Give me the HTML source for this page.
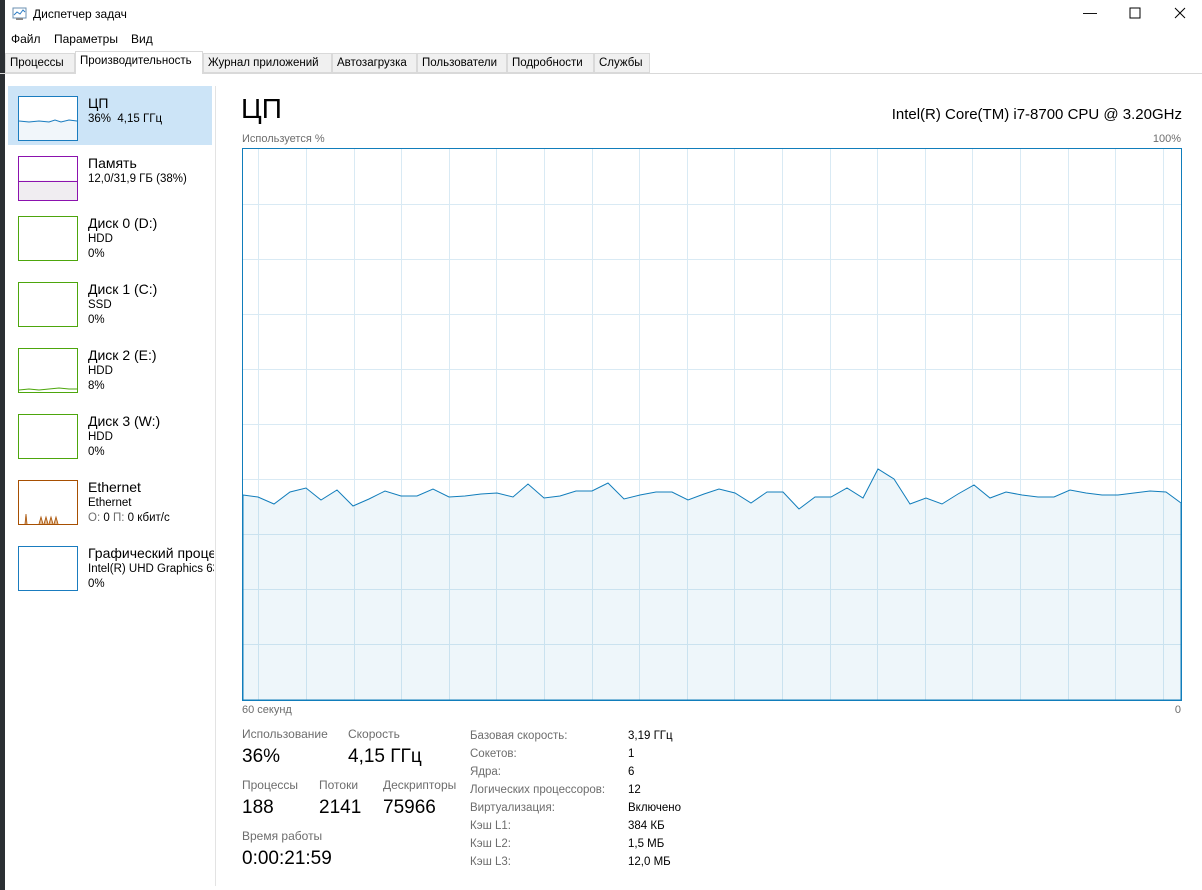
<!DOCTYPE html>
<html><head><meta charset="utf-8"><style>
*{margin:0;padding:0;box-sizing:border-box}
body{width:1202px;height:890px;background:#fff;font-family:"Liberation Sans","DejaVu Sans",sans-serif;color:#000;position:relative;overflow:hidden;font-size:12px}
.a{position:absolute;white-space:nowrap}
.g{color:#6d6d6d}
.tab{position:absolute;top:53px;height:20px;border:1px solid #d9d9d9;background:#f0f0f0;font-size:11.5px;padding:3px 4px 0}
.th{position:absolute;left:18px;width:60px;height:45px;border:1px solid}
.nm{font-size:14px}
.s{font-size:11.5px}
</style></head><body>
<div class="a" style="left:0;top:0;width:5px;height:890px;background:#2b2f33"></div>
<svg class="a" style="left:12px;top:6px" width="16" height="16"><rect x="1" y="2" width="13" height="10" fill="#fff" stroke="#6a8fb0"/><polyline points="2,9 5,6 8,8 11,4 13,6" fill="none" stroke="#2a7bc4"/><rect x="4" y="12" width="7" height="2" fill="#888"/></svg>
<div class="a" style="left:33px;top:7px;font-size:12px">Диспетчер задач</div>
<div class="a" style="left:1083px;top:4px;font-size:14px">&#8212;</div>
<svg class="a" style="left:1129px;top:7px" width="12" height="12"><rect x="1" y="1" width="10" height="10" fill="none" stroke="#000"/></svg>
<svg class="a" style="left:1174px;top:7px" width="12" height="12"><path d="M1 1L11 11M11 1L1 11" stroke="#000"/></svg>
<div class="a" style="left:11px;top:32px">Файл</div>
<div class="a" style="left:54px;top:32px">Параметры</div>
<div class="a" style="left:131px;top:32px">Вид</div>
<div class="a" style="left:0;top:73px;width:1202px;height:1px;background:#d9d9d9"></div>
<div class="tab" style="left:5px;width:70px">Процессы</div>
<div class="tab" style="left:75px;top:51px;height:23px;width:128px;background:#fff;border-bottom:none">Производительность</div>
<div class="tab" style="left:203px;width:129px">Журнал приложений</div>
<div class="tab" style="left:332px;width:85px">Автозагрузка</div>
<div class="tab" style="left:417px;width:90px">Пользователи</div>
<div class="tab" style="left:507px;width:87px">Подробности</div>
<div class="tab" style="left:594px;width:56px">Службы</div>
<div class="a" style="left:215px;top:86px;width:1px;height:800px;background:#e3e3e3"></div>
<div class="a" style="left:8px;top:86px;width:204px;height:59px;background:#cce4f7"></div>
<div class="th" style="top:96px;border-color:#1a7cbf;background:linear-gradient(#fff 55%,#f1f6fa 55%)"><svg width="58" height="43"><polyline points="0,24 10,25 20,24 30,25 36,23 42,25 50,23 58,24" fill="none" stroke="#1a7cbf"/></svg></div>
<div class="a nm" style="left:88px;top:95px">ЦП</div><div class="a s" style="left:88px;top:113px">36%&nbsp; 4,15 ГГц</div>
<div class="th" style="top:156px;border-color:#8b12ae;background:linear-gradient(#fff 55%,#f0edf1 55%)"><div style="position:absolute;left:0;right:0;top:24px;height:1px;background:#8b12ae"></div></div>
<div class="a nm" style="left:88px;top:155px">Память</div><div class="a s" style="left:88px;top:173px">12,0/31,9 ГБ (38%)</div>
<div class="th" style="top:216px;border-color:#4da60c"></div>
<div class="a nm" style="left:88px;top:215px">Диск 0 (D:)</div><div class="a s" style="left:88px;top:233px">HDD</div><div class="a s" style="left:88px;top:248px">0%</div>
<div class="th" style="top:282px;border-color:#4da60c"></div>
<div class="a nm" style="left:88px;top:281px">Диск 1 (C:)</div><div class="a s" style="left:88px;top:299px">SSD</div><div class="a s" style="left:88px;top:314px">0%</div>
<div class="th" style="top:348px;border-color:#4da60c"><svg width="58" height="43"><polyline points="0,41 10,40 20,41 30,40 40,39 50,40 58,40" fill="none" stroke="#4da60c"/></svg></div>
<div class="a nm" style="left:88px;top:347px">Диск 2 (E:)</div><div class="a s" style="left:88px;top:365px">HDD</div><div class="a s" style="left:88px;top:380px">8%</div>
<div class="th" style="top:414px;border-color:#4da60c"></div>
<div class="a nm" style="left:88px;top:413px">Диск 3 (W:)</div><div class="a s" style="left:88px;top:431px">HDD</div><div class="a s" style="left:88px;top:446px">0%</div>
<div class="th" style="top:480px;border-color:#a74f01"><svg width="58" height="43"><path d="M6 43L7 33L8 43M20 43L22 36L24 43M25 43L27 36L29 43M30 43L32 36L34 43M35 43L37 36L39 43" fill="#e0b890" stroke="#a74f01" stroke-width=".8"/></svg></div>
<div class="a nm" style="left:88px;top:479px">Ethernet</div><div class="a s" style="left:88px;top:497px">Ethernet</div><div class="a s" style="left:88px;top:512px"><span class="g">О:</span> 0 <span class="g">П:</span> 0 кбит/с</div>
<div class="th" style="top:546px;border-color:#1a7cbf"></div>
<div class="a nm" style="left:88px;top:545px;width:126px;overflow:hidden">Графический процессор</div><div class="a s" style="left:88px;top:563px;width:126px;overflow:hidden">Intel(R) UHD Graphics 630</div><div class="a s" style="left:88px;top:578px">0%</div>
<div class="a" style="left:241px;top:93px;font-size:28px">ЦП</div>
<div class="a" style="left:886px;top:106px;font-size:15px;width:296px;text-align:right">Intel(R) Core(TM) i7-8700 CPU @ 3.20GHz</div>
<div class="a g" style="left:242px;top:133px;font-size:11px">Используется %</div>
<div class="a g" style="left:1140px;top:133px;font-size:11px;width:41px;text-align:right">100%</div>
<svg class="a" style="left:242px;top:148px" width="940" height="553">
<g stroke="#d9eaf4" stroke-width="1">
<path d="M16.5 0V553M64.5 0V553M112.5 0V553M159.5 0V553M207.5 0V553M254.5 0V553M302.5 0V553M350.5 0V553M397.5 0V553M445.5 0V553M492.5 0V553M540.5 0V553M588.5 0V553M635.5 0V553M683.5 0V553M730.5 0V553M778.5 0V553M826.5 0V553M873.5 0V553M921.5 0V553"/>
<path d="M0 56.5H940M0 111.5H940M0 166.5H940M0 221.5H940M0 276.5H940M0 331.5H940M0 386.5H940M0 441.5H940M0 496.5H940"/>
</g>
<polygon fill="rgba(17,125,187,0.07)" stroke="#117dbb" stroke-width="1" points="1,347 16,349 32,356 48,344 64,340 79,352 95,342 111,358 127,351 143,343 159,348 175,348 191,341 207,349 223,348 239,346 255,345 271,349 286,336 302,350 318,348 334,343 350,343 366,335 382,351 398,347 414,344 430,344 446,352 462,346 477,341 493,345 509,355 525,344 541,344 557,361 573,349 589,349 605,340 621,350 636,321 652,331 668,356 684,350 700,356 716,346 732,337 748,350 764,344 780,347 796,349 812,349 828,342 844,345 860,347 876,347 892,345 908,343 924,344 939,355 939,552 1,552"/>
<rect x="0.5" y="0.5" width="939" height="552" fill="none" stroke="#117dbb"/>
</svg>
<div class="a g" style="left:242px;top:704px;font-size:11px">60 секунд</div>
<div class="a g" style="left:1170px;top:704px;font-size:11px;width:11px;text-align:right">0</div>
<div class="a g" style="left:242px;top:727px">Использование</div>
<div class="a g" style="left:348px;top:727px">Скорость</div>
<div class="a" style="left:242px;top:746px;font-size:19px">36%</div>
<div class="a" style="left:348px;top:746px;font-size:19px">4,15 ГГц</div>
<div class="a g" style="left:242px;top:778px">Процессы</div>
<div class="a g" style="left:319px;top:778px">Потоки</div>
<div class="a g" style="left:383px;top:778px">Дескрипторы</div>
<div class="a" style="left:242px;top:797px;font-size:19px">188</div>
<div class="a" style="left:319px;top:797px;font-size:19px">2141</div>
<div class="a" style="left:383px;top:797px;font-size:19px">75966</div>
<div class="a g" style="left:242px;top:829px">Время работы</div>
<div class="a" style="left:242px;top:848px;font-size:19px">0:00:21:59</div>
<div class="a g" style="left:470px;top:727px;line-height:18px;font-size:11.5px">Базовая скорость:<br>Сокетов:<br>Ядра:<br>Логических процессоров:<br>Виртуализация:<br>Кэш L1:<br>Кэш L2:<br>Кэш L3:</div>
<div class="a" style="left:628px;top:727px;line-height:18px;font-size:11.5px">3,19 ГГц<br>1<br>6<br>12<br>Включено<br>384 КБ<br>1,5 МБ<br>12,0 МБ</div>
</body></html>
